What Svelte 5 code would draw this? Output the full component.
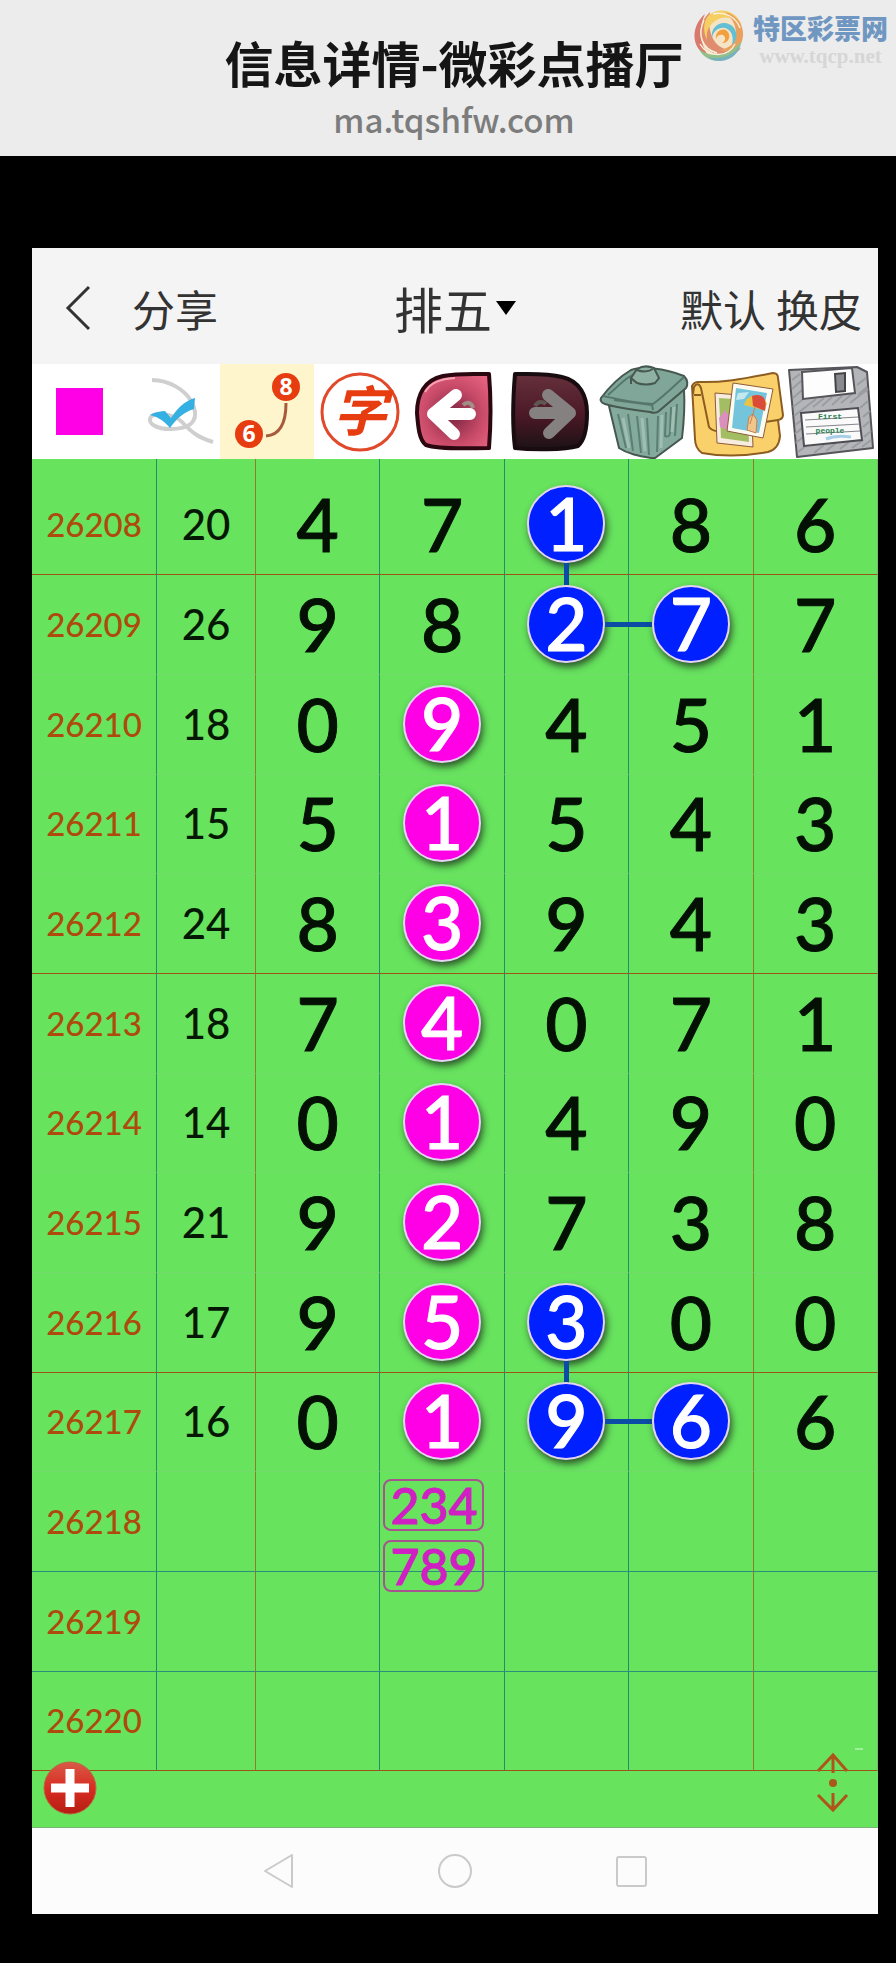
<script lang="ts">
  type Ball = { color: 'pink' | 'blue'; link?: 'down' | 'right' };
  type Row = { issue: string; sum?: number; digits: number[]; balls?: Record<number, Ball>; line?: 'red' | 'blue' };

  const pink: Ball = { color: 'pink' };
  const blue: Ball = { color: 'blue' };

  const rows: Row[] = [
    { issue: '26208', sum: 20, digits: [4, 7, 1, 8, 6], balls: { 2: { color: 'blue', link: 'down' } }, line: 'red' },
    { issue: '26209', sum: 26, digits: [9, 8, 2, 7, 7], balls: { 2: { color: 'blue', link: 'right' }, 3: blue } },
    { issue: '26210', sum: 18, digits: [0, 9, 4, 5, 1], balls: { 1: pink } },
    { issue: '26211', sum: 15, digits: [5, 1, 5, 4, 3], balls: { 1: pink } },
    { issue: '26212', sum: 24, digits: [8, 3, 9, 4, 3], balls: { 1: pink }, line: 'red' },
    { issue: '26213', sum: 18, digits: [7, 4, 0, 7, 1], balls: { 1: pink } },
    { issue: '26214', sum: 14, digits: [0, 1, 4, 9, 0], balls: { 1: pink } },
    { issue: '26215', sum: 21, digits: [9, 2, 7, 3, 8], balls: { 1: pink } },
    { issue: '26216', sum: 17, digits: [9, 5, 3, 0, 0], balls: { 1: pink, 2: { color: 'blue', link: 'down' } }, line: 'red' },
    { issue: '26217', sum: 16, digits: [0, 1, 9, 6, 6], balls: { 1: pink, 2: { color: 'blue', link: 'right' }, 3: blue } },
    { issue: '26218', digits: [], line: 'blue' },
    { issue: '26219', digits: [], line: 'blue' },
    { issue: '26220', digits: [], line: 'red' }
  ];

  const notes = ['234', '789'];
  const noteIssue = '26218';
  const noteColumn = 1;
  const columns = [0, 1, 2, 3, 4];
</script>

<header class="site-header">
  <h1>信息详情-微彩点播厅</h1>
  <p class="host">ma.tqshfw.com</p>
  <div class="brand">
    <svg class="brand-logo" viewBox="0 0 52 54" aria-hidden="true">
      <circle cx="26" cy="27" r="23" fill="#f4e3c4" />
      <path d="M12 6C-3 19-2 41 15 48c-8-13-10-28-3-42z" fill="#d9786c" />
      <path d="M17 4C3 17 4 37 22 46c10 4 21 1 26-6-9 4-20 2-26-6-7-10-6-20-5-30z" fill="#df8d6f" />
      <path d="M15 8C26-2 44 2 49 18c-8-9-18-11-27-5-7 5-9 12-8 19-4-8-4-17 1-24z" fill="#f6cf63" />
      <path d="M32 4c14 3 21 17 17 29-5 9-15 12-23 9 10-1 17-7 17-17 0-9-5-16-11-21z" fill="#e9a05f" />
      <path d="M6 41c11 9 27 9 43-8-4 14-17 22-30 19-6-2-11-6-13-11z" fill="#93c088" />
      <path d="M15 49c12 3 24-1 33-12-4 11-13 16-21 16-5 0-9-1-12-4z" fill="#76b2bd" />
      <path d="M19 30c-2-11 9-19 19-13 7 5 7 15 1 20 2-8 0-15-7-17-6-1-12 3-13 10z" fill="#63bfd4" />
      <path d="M23 31c-1-7 6-12 11-8 5 5 1 13-5 12 4-2 4-6 1-8-3-1-6 0-7 4z" fill="#f2a03f" />
      <path d="M7 36c8 14 28 14 35 0M11 12c-7 15-2 29 13 33M20 6c12-3 23 3 27 14" fill="none" stroke="#fbf1dc" stroke-width="1.4" />
    </svg>
    <div class="brand-text">
      <strong>特区彩票网</strong>
      <span>www.tqcp.net</span>
    </div>
  </div>
</header>

<main class="phone">
  <nav class="nav-bar">
    <div class="nav-left">
      <button class="plain" aria-label="返回">
        <svg class="back" viewBox="0 0 28 48"><path d="M25 3 4 24l21 21" fill="none" stroke="#333" stroke-width="3" /></svg>
      </button>
      <button class="plain">分享</button>
    </div>
    <button class="plain game">
      排五
      <svg class="caret" viewBox="0 0 20 14" aria-hidden="true"><path d="M0 0h20L10 14z" /></svg>
    </button>
    <div class="nav-right">
      <button class="plain">默认</button>
      <button class="plain">换皮</button>
    </div>
  </nav>

  <div class="tools">
    <button class="tool" aria-label="颜色">
      <svg viewBox="0 0 94 95"><rect x="24" y="24" width="47" height="47" fill="#ff00e6" /></svg>
    </button>
    <button class="tool" aria-label="画线">
      <svg viewBox="0 0 94 95">
        <path d="M26 16c17 0 33 10 39 21 9 16 4 28-21 28-13 0-21-5-20-10 1-8 23-6 32 3 11 12 18 16 31 20" fill="none" stroke="#cfcfcf" stroke-width="4" />
        <path d="M24 51c5-3 11-4 15-4l6 7c6-9 13-17 24-20l-1 11c-10 3-18 10-24 19-5-6-11-11-20-13z" fill="#35b0e3" />
      </svg>
    </button>
    <button class="tool active" aria-label="连线">
      <svg viewBox="0 0 94 95">
        <path d="M66 39c0 20-6 32-20 33" fill="none" stroke="#a85a3c" stroke-width="3" />
        <circle cx="66" cy="23" r="14" fill="#e63c0f" />
        <circle cx="29" cy="70" r="14" fill="#e63c0f" />
        <text x="66" y="31" class="dot-number">8</text>
        <text x="29" y="78" class="dot-number">6</text>
      </svg>
    </button>
    <button class="tool" aria-label="写字">
      <svg viewBox="0 0 94 95">
        <circle cx="46" cy="48" r="38" fill="#fff" stroke="#e2492a" stroke-width="3" />
        <text x="46" y="67" class="word">字</text>
      </svg>
    </button>
    <button class="tool" aria-label="后退">
      <svg viewBox="0 0 94 95">
        <defs>
          <radialGradient id="undo" cx=".5" cy=".55" r=".65">
            <stop offset="0" stop-color="#7a2540" />
            <stop offset=".6" stop-color="#c94b69" />
            <stop offset="1" stop-color="#e5637f" />
          </radialGradient>
        </defs>
        <path d="M81 10C65 10 50 9 35 12 16 16 9 31 9 49c1 13 2 27 9 32 14 5 45 3 63 3 2-25 2-50 0-74z" fill="url(#undo)" stroke="#2b0710" stroke-width="4" stroke-linejoin="round" />
        <path d="M17 28c6-10 16-13 30-14" fill="none" stroke="#f7a5b4" stroke-width="2" />
        <path d="M55 41c5-4 9-2 10 3" fill="none" stroke="#a08f87" stroke-width="4" />
        <path d="M48 31 25 50l21 20M27 50h35" fill="none" stroke="#fff" stroke-width="12" stroke-linecap="round" stroke-linejoin="round" />
      </svg>
    </button>
    <button class="tool" aria-label="前进">
      <svg viewBox="0 0 94 95">
        <defs>
          <linearGradient id="redo" x1="0" y1="0" x2="0" y2="1">
            <stop offset="0" stop-color="#66313c" />
            <stop offset=".55" stop-color="#4b1826" />
            <stop offset="1" stop-color="#1c1216" />
          </linearGradient>
        </defs>
        <path d="M13 10c16 0 32-1 47 3 18 4 25 19 25 36 0 13-2 27-9 33-14 4-46 4-63 2-3-25-2-50 0-74z" fill="url(#redo)" stroke="#180c10" stroke-width="4" stroke-linejoin="round" />
        <path d="M33 42c3-5 7-5 11-2" fill="none" stroke="#5f5551" stroke-width="4" />
        <path d="m46 31 22 18-21 20M66 49H33" fill="none" stroke="#858181" stroke-width="12" stroke-linecap="round" stroke-linejoin="round" />
      </svg>
    </button>
    <button class="tool" aria-label="清空">
      <svg viewBox="0 0 94 95">
        <path d="m13 42 10 42c9 6 20 8 32 10h4l27-20c2-17 3-32 2-48z" fill="#84aa9d" stroke="#46584f" stroke-width="2" />
        <path d="m22 50 8 34M32 50l5 37M41 52l4 37M51 54l2 37M62 52l-1 36M70 48l-1 24q4 2 5-3l1-26M81 40l-2 32" fill="none" stroke="#5c7f73" stroke-width="2" />
        <path d="m27 54 6 30M46 54l3 33M66 51l-1 33M78 43l-2 25" fill="none" stroke="#9fbfb3" stroke-width="3" />
        <path d="M5 34C14 22 23 13 35 6c10-4 33-2 53 6 4 4 4 9 2 12L63 47c-2 2-6 2-9 1C38 46 22 44 9 40c-4-1-5-4-4-6z" fill="#7fa698" stroke="#46584f" stroke-width="2" />
        <path d="M7 32c14 3 31 7 50 8 11-8 20-17 31-27M12 31c14-12 20-20 31-22M18 36l38 5 1 5" fill="none" stroke="#55766b" stroke-width="2" />
        <path d="m35 14 6-9c5-3 12-3 17-1l5 10-4 5c-6 2-12 2-18 0z" fill="#8fb1a4" stroke="#46584f" stroke-width="2" />
        <path d="M41 6c5 2 11 2 16-1M35 14v6" fill="none" stroke="#46584f" stroke-width="2" />
      </svg>
    </button>
    <button class="tool" aria-label="相册">
      <svg viewBox="0 0 94 95">
        <path d="M2 22q2-4 6-4c26 1 49-4 75-9q5 0 5 5l5 37q0 4-5 5l2 16q-1 13-12 16c-22 4-44 5-66 1Q5 84 5 75z" fill="#fad06b" stroke="#8d5c20" stroke-width="2" />
        <path d="m3 30 1-7q4-6 7 1l8 39q3 4 9 4M75 58l13-2M4 31h7" fill="none" stroke="#8d5c20" stroke-width="2" />
        <path d="m25 29 36 3 2 51-36-4z" fill="#f7ecdf" stroke="#8b5c39" stroke-width="1" />
        <path d="m29 34 28 2 2 42-28-4z" fill="#a3be62" />
        <path d="m29 54 6-8 7 10-4 10-8-3z" fill="#db8fbd" />
        <path d="m43 19 40 6-10 49-36-7z" fill="#fffaf0" stroke="#8b5c39" stroke-width="1" />
        <path d="m46 24 31 5-8 40-27-5z" fill="#74c5dc" />
        <path d="m48 29 11-1-5 7-8 1z" fill="#c5e8ee" />
        <path d="M54 41c3-12 19-13 23-1l-4 6z" fill="#ebc344" />
        <path d="M62 32c9-3 16 1 13 15l-12-5z" fill="#db4c38" />
        <path d="m65 43-5 17M57 66l2-13 4-3 4 6-1 13z" stroke="#c98050" stroke-width="1" fill="#f2c68b" />
      </svg>
    </button>
    <button class="tool" aria-label="保存">
      <svg viewBox="0 0 94 95">
        <path d="m5 6 68-3 10 5 6 76-76 9z" fill="#b4b5b9" stroke="#55555a" stroke-width="2" stroke-linejoin="round" />
        <path d="m8 16 8-6M8 25l9-8M9 34l9-8M9 43 22 33M10 52l22-17M11 61l7-5M11 70l7-6M12 79l7-6M14 88l9-7M29 43l11-9M38 42l10-9M48 41l10-9M57 39l11-9M66 39l18-14M73 21l9-7M74 31l9-8M76 44l8-7M79 53l7-6M79 63l7-6M80 73l7-6M30 89l10-8M42 87l10-8M56 85l9-7M68 84l11-8M78 83l9-7" fill="none" stroke="#9b9ca1" stroke-width="2" />
        <path d="m18 8 50-4 3 25-52 6z" fill="#fdfdfd" stroke="#55555b" stroke-width="2" />
        <path d="m51 10 10-1v18l-9 1z" fill="#898990" stroke="#444" stroke-width="2" />
        <path d="m17 49 57-5 4 32-58 6z" fill="#fafafa" stroke="#4d4d53" stroke-width="2" />
        <path d="m21 56 53-3M22 63l54-3M22 70l54-3" stroke="#85858b" stroke-width="1" />
        <path d="M42 75q10-4 25-2" fill="none" stroke="#a7d0e8" stroke-width="3" />
        <text x="46" y="55" class="disk-label">First</text>
        <text x="46" y="69" class="disk-label">people</text>
      </svg>
    </button>
  </div>

  <section class="board">
    <table>
      <colgroup>
        <col class="col-issue" />
        <col class="col-sum" />
        {#each columns as column}<col />{/each}
      </colgroup>
      <tbody>
        {#each rows as row}
          <tr class={row.line ? `line-${row.line}` : ''}>
            <th scope="row">{row.issue}</th>
            <td class="sum">{row.sum ?? ''}</td>
            {#each columns as column}
              {@const ball = row.balls?.[column]}
              <td class="digit">
                {#if ball}
                  <span class="ball {ball.color} {ball.link ? `link-${ball.link}` : ''}">{row.digits[column]}</span>
                {:else}
                  {row.digits[column] ?? ''}
                {/if}
                {#if row.issue === noteIssue && column === noteColumn}
                  <div class="notes">
                    {#each notes as note}<span class="note">{note}</span>{/each}
                  </div>
                {/if}
              </td>
            {/each}
          </tr>
        {/each}
      </tbody>
    </table>
    <button class="plain add" aria-label="添加">
      <svg viewBox="0 0 54 54">
        <defs>
          <linearGradient id="add" x1="0" y1="0" x2="0" y2="1">
            <stop offset="0" stop-color="#d85a48" />
            <stop offset=".5" stop-color="#d92c22" />
            <stop offset="1" stop-color="#b51d12" />
          </linearGradient>
        </defs>
        <circle cx="27" cy="27" r="26" fill="url(#add)" stroke="#b86a3c" stroke-width="1" />
        <path d="M27 8v38M8 27h38" stroke="#fff" stroke-width="9" />
      </svg>
    </button>
    <button class="plain scroll" aria-label="上下滚动">
      <svg viewBox="0 0 48 66">
        <path d="M3 24 18 8l14 16M18 8v18M3 48l15 15 14-15M18 63V46" fill="none" stroke="#b0541c" stroke-width="3" />
        <circle cx="18" cy="36" r="4" fill="#a9571d" />
        <path d="M40 2h8" stroke="#9ff09a" stroke-width="2" />
      </svg>
    </button>
  </section>

  <footer class="keys">
    <button class="plain" aria-label="返回键">
      <svg viewBox="0 0 36 36"><path d="M31 2v32L4 18z" fill="none" stroke="#cacaca" stroke-width="2" stroke-linejoin="round" /></svg>
    </button>
    <button class="plain" aria-label="主页键">
      <svg viewBox="0 0 36 36"><circle cx="18" cy="18" r="16" fill="none" stroke="#cacaca" stroke-width="2" /></svg>
    </button>
    <button class="plain" aria-label="任务键">
      <svg viewBox="0 0 36 36"><rect x="4" y="4" width="29" height="29" rx="2" fill="none" stroke="#cacaca" stroke-width="2" /></svg>
    </button>
  </footer>
</main>

<style>
  :global(body) {
    background: #000;
    font-family: "Noto Sans CJK SC", "Noto Sans", sans-serif;
  }

  .site-header {
    position: relative;
    display: flex;
    flex-direction: column;
    align-items: center;
    padding: 34px 0 14px 12px;
    background: #ececec;
  }

  h1 {
    margin: 0;
    font-size: 49px;
    line-height: 56px;
    font-weight: 700;
    color: #151515;
  }

  .host {
    margin: 6px 0 0;
    font-size: 33px;
    line-height: 46px;
    font-weight: 500;
    color: #7c7c7c;
  }

  .brand {
    position: absolute;
    top: 8px;
    right: 8px;
    display: flex;
    gap: 8px;
  }

  .brand-logo {
    width: 52px;
    height: 54px;
  }

  .brand-text {
    display: flex;
    flex-direction: column;
    align-items: center;
  }

  .brand-text strong {
    font-size: 27px;
    line-height: 40px;
    font-weight: 900;
    color: #6f97c1;
  }

  .brand-text span {
    font-family: "Liberation Serif", serif;
    font-size: 21px;
    line-height: 16px;
    font-weight: 700;
    color: #d6d6d6;
  }

  .phone {
    margin: 92px 18px 50px 32px;
    background: #fcfcfc;
  }

  .plain {
    padding: 0;
    border: 0;
    background: none;
    font: inherit;
    color: inherit;
  }

  svg {
    display: block;
  }

  .nav-bar {
    display: grid;
    grid-template-columns: 1fr auto 1fr;
    align-items: center;
    height: 116px;
    padding: 4px 16px 0;
    box-sizing: border-box;
    background: #f4f4f4;
    font-size: 43px;
    line-height: 60px;
    color: #333;
  }

  .nav-left {
    display: flex;
    align-items: center;
    gap: 40px;
    padding-left: 16px;
  }

  .back {
    width: 28px;
    height: 48px;
  }

  .game {
    display: flex;
    align-items: center;
    gap: 4px;
    font-size: 49px;
  }

  .caret {
    width: 20px;
    height: 14px;
  }

  .nav-right {
    display: flex;
    justify-content: flex-end;
    gap: 10px;
  }

  .tools {
    display: grid;
    grid-template-columns: repeat(9, 1fr);
    background: #fff;
  }

  .tool {
    padding: 0;
    border: 0;
    background: none;
  }

  .tool svg {
    width: 100%;
    height: 95px;
  }

  .active {
    background: #fff5cc;
  }

  .dot-number {
    fill: #fff;
    font-family: "Noto Sans", sans-serif;
    font-size: 23px;
    font-weight: 700;
    text-anchor: middle;
  }

  .word {
    fill: #e63c0f;
    font-family: "Noto Sans CJK SC", sans-serif;
    font-size: 54px;
    font-weight: 700;
    font-style: italic;
    text-anchor: middle;
  }

  .disk-label {
    fill: #29804f;
    font-family: "Liberation Mono", monospace;
    font-size: 8px;
    font-weight: 700;
    text-anchor: middle;
  }

  .board {
    position: relative;
    padding-bottom: 56px;
    background: #67e35e;
    border-bottom: 1px solid #76b573;
  }

  table {
    width: 100%;
    table-layout: fixed;
    border-collapse: separate;
    border-spacing: 0;
    font-family: Lato, "Noto Sans", sans-serif;
    font-weight: 500;
    text-align: center;
  }

  .col-issue {
    width: 125px;
  }

  .col-sum {
    width: 99px;
  }

  th,
  td {
    height: 100px;
    padding: 0 0 2px;
    box-sizing: border-box;
    border-right: 1px solid #1f8f6c;
    border-bottom: 1px solid #70db69;
  }

  tr:nth-child(3n + 1) > * {
    height: 99px;
  }

  tr:first-child > * {
    height: 116px;
    padding-top: 16px;
  }

  td:nth-child(2),
  td:nth-child(6) {
    border-right-color: #8c7d2f;
  }

  td:last-child {
    border-right-color: #79bc68;
  }

  .line-red > * {
    border-bottom-color: #9c5418;
  }

  .line-blue > * {
    border-bottom-color: #2b8f7c;
  }

  th {
    font-size: 33px;
    font-weight: 500;
    color: #ad4a0c;
  }

  .sum {
    font-size: 42px;
    color: #041804;
  }

  .digit {
    position: relative;
    font-size: 73px;
    line-height: 74px;
    color: #031003;
    -webkit-text-stroke: 1px currentColor;
  }

  .ball {
    position: relative;
    z-index: 1;
    display: block;
    width: 74px;
    height: 74px;
    margin: 0 auto;
    border: 2px solid #e3d5f2;
    border-radius: 50%;
    line-height: 72px;
    color: #fff;
    box-shadow: 2px 4px 7px rgba(30, 50, 30, 0.8);
  }

  .pink {
    background: #ff00e6;
  }

  .blue {
    background: #0020ff;
  }

  .link-down::after,
  .link-right::after {
    content: "";
    position: absolute;
    background: #0b4da5;
  }

  .link-down::after {
    top: 76px;
    left: 35px;
    width: 5px;
    height: 22px;
  }

  .link-right::after {
    top: 35px;
    left: 76px;
    width: 47px;
    height: 5px;
  }

  .notes {
    position: absolute;
    top: 7px;
    left: 3px;
    z-index: 1;
    display: flex;
    flex-direction: column;
    align-items: flex-start;
    gap: 9px;
  }

  .note {
    padding: 0 5px;
    border: 2px solid #a65390;
    border-radius: 8px;
    font-size: 50px;
    line-height: 48px;
    color: #d01fc2;
  }

  .add {
    position: absolute;
    left: 11px;
    bottom: 12px;
  }

  .add svg {
    width: 54px;
    height: 54px;
  }

  .scroll {
    position: absolute;
    right: 15px;
    bottom: 14px;
  }

  .scroll svg {
    width: 48px;
    height: 66px;
  }

  .keys {
    display: flex;
    justify-content: center;
    align-items: center;
    gap: 140px;
    height: 86px;
  }

  .keys svg {
    width: 36px;
    height: 36px;
  }
</style>
